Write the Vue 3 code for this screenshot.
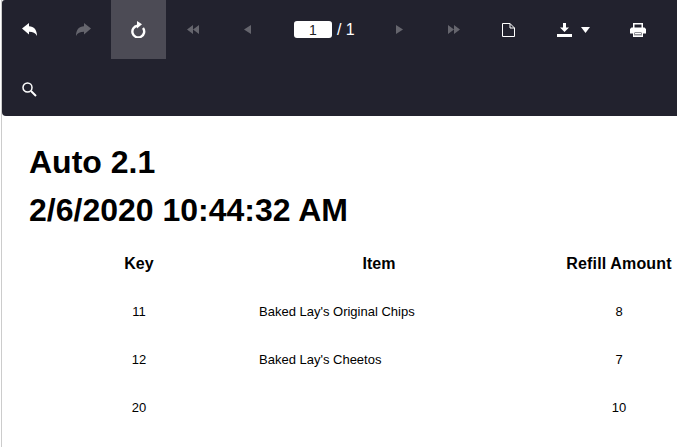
<script setup>
const rows = [
  { key: 11, item: "Baked Lay's Original Chips", amount: 8 },
  { key: 12, item: "Baked Lay's Cheetos", amount: 7 },
  { key: 20, item: '', amount: 10 }
]
</script>

<template>
  <div class="page">
    <div class="viewer">
      <div class="toolbar">
        <div class="row">
          <button class="tool">
            <svg width="15" height="13" viewBox="0 0 15 13"><path d="M0 5.500 7 0v3.200c5 .2 8 3.500 8 9.800C13.500 10 11 8.800 7 8.800V11.500z" fill="#fff"/></svg>
          </button>
          <button class="tool off">
            <svg width="15" height="13" viewBox="0 0 15 13"><path d="M15 5.500 8 0v3.200c-5 .2-8 3.500-8 9.800C1.500 10 4 8.800 8 8.800V11.500z" fill="#fff"/></svg>
          </button>
          <button class="tool active">
            <svg width="16" height="17" viewBox="0 0 16 17"><path d="M7.500 4.700A5.900 5.900 0 1 0 13 7" fill="none" stroke="#fff" stroke-width="2.400"/><path d="M7 0 12 3.300 7 7.400z" fill="#fff"/></svg>
          </button>
          <button class="tool off">
            <svg width="12" height="9" viewBox="0 0 12 9"><path d="M6 0v9L0 4.500zM12 0v9L6 4.500z" fill="#fff"/></svg>
          </button>
          <button class="tool off">
            <svg width="7" height="9" viewBox="0 0 7 9"><path d="M7 0v9L0 4.500z" fill="#fff"/></svg>
          </button>
          <div class="pager">
            <input class="page-num" value="1" />
            <span>/ 1</span>
          </div>
          <button class="tool off">
            <svg width="7" height="9" viewBox="0 0 7 9"><path d="M0 0v9l7-4.500z" fill="#fff"/></svg>
          </button>
          <button class="tool off">
            <svg width="12" height="9" viewBox="0 0 12 9"><path d="M0 0v9l6-4.500zM6 0v9l6-4.500z" fill="#fff"/></svg>
          </button>
          <button class="tool">
            <svg width="13" height="14" viewBox="0 0 13 14"><path d="M.5.500h7.500l4.500 4.500v8.500H.5zM8 .500V5h4.500" fill="none" stroke="#fff"/></svg>
          </button>
          <button class="tool export">
            <svg width="15" height="14" viewBox="0 0 15 14"><path d="M6 0h3v4.500h3L7.500 9 3 4.500h3zM0 11h15v3H0z" fill="#fff"/></svg>
            <svg width="9" height="6" viewBox="0 0 9 6"><path d="M0 0h9L4.500 6z" fill="#fff"/></svg>
          </button>
          <button class="tool">
            <svg width="16" height="14" viewBox="0 0 16 14"><path d="M3.750 5V.750h8.500V5" fill="none" stroke="#fff" stroke-width="1.500"/><path d="M1.500 4.500h13L16 6v4.500h-3V8H3v2.500H0V6z" fill="#fff"/><path d="M3.750 8.750h8.500v4.500h-8.500z" fill="none" stroke="#fff" stroke-width="1.500"/><path d="M5 10.500h6M5 12h6" stroke="#fff"/></svg>
          </button>
        </div>
        <div class="row">
          <button class="tool">
            <svg width="15" height="15" viewBox="0 0 15 15"><circle cx="5.500" cy="5.500" r="4.500" fill="none" stroke="#fff" stroke-width="1.500"/><path d="M9 9l5 5" stroke="#fff" stroke-width="2"/></svg>
          </button>
        </div>
      </div>

      <div class="report">
        <h1>Auto 2.1</h1>
        <h1>2/6/2020 10:44:32 AM</h1>
        <table>
          <thead>
            <tr>
              <th>Key</th>
              <th>Item</th>
              <th class="amount">Refill Amount</th>
            </tr>
          </thead>
          <tbody>
            <tr v-for="row in rows" :key="row.key">
              <td>{{ row.key }}</td>
              <td class="item">{{ row.item }}</td>
              <td>{{ row.amount }}</td>
            </tr>
          </tbody>
        </table>
      </div>
    </div>
  </div>
</template>

<style>
html, body {
  margin: 0;
  background: #fff;
  overflow: hidden;
}
</style>

<style scoped>
.page {
  width: 677px;
  height: 447px;
  overflow: hidden;
  font-family: 'Liberation Sans', Arial, sans-serif;
}

.viewer {
  margin-left: 1px;
  height: 447px;
  border-left: 1px solid #ccc;
}

.toolbar {
  background-color: #22222e;
  height: 116px;
  border-radius: 3px 0 0 4px;
}

.row {
  display: flex;
  height: 59px;
}

.row + .row {
  height: 57px;
  box-sizing: border-box;
  padding-top: 3px;
}

.tool {
  width: 54.5px;
  height: 100%;
  flex: none;
  padding: 0;
  border: none;
  background: none;
  display: flex;
  align-items: center;
  justify-content: center;
  gap: 9px;
}

.tool.off svg {
  opacity: 0.3;
}

.tool.active {
  background-color: #4c4b55;
}

.tool.export {
  width: 75px;
}

.pager {
  width: 97.75px;
  flex: none;
  display: flex;
  align-items: center;
  justify-content: center;
  gap: 5px;
  color: #fff;
  font-size: 16px;
}

.page-num {
  width: 38px;
  height: 17px;
  margin-left: 2px;
  box-sizing: border-box;
  border: none;
  border-radius: 3px;
  padding: 0;
  text-align: center;
  font-family: 'Liberation Sans', Arial, sans-serif;
  font-size: 14px;
  color: #222;
  background: #fff;
}

.report {
  padding: 22px 0 0 27px;
}

h1 {
  margin: 0;
  font-size: 32px;
  line-height: 48px;
  font-weight: bold;
  color: #000;
  white-space: nowrap;
}

table {
  border-collapse: collapse;
  table-layout: fixed;
  width: 700px;
  margin-top: 6px;
  font-size: 13px;
  color: #000;
}

th {
  height: 47px;
  padding: 0;
  font-size: 16px;
  text-align: center;
  white-space: nowrap;
}

th.amount {
  letter-spacing: 0.15px;
}

td {
  height: 48px;
  padding: 0;
  text-align: center;
}

th:nth-child(1) {
  width: 220px;
}

th:nth-child(2) {
  width: 260px;
}

th:nth-child(3) {
  width: 220px;
}

td.item {
  text-align: left;
  padding-left: 10px;
}
</style>
